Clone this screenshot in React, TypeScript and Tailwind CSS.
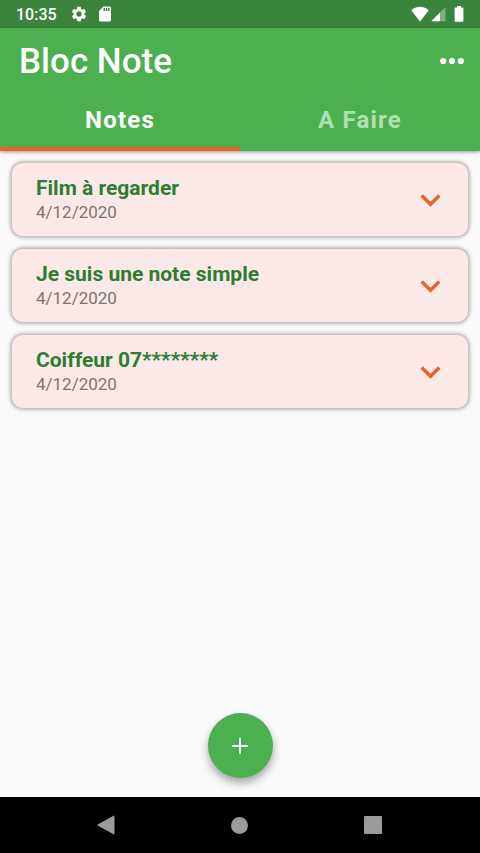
import { MdSdCard, MdSettings } from 'react-icons/md';

const notes = [
  { title: 'Film à regarder', date: '4/12/2020' },
  { title: 'Je suis une note simple', date: '4/12/2020' },
  { title: 'Coiffeur 07********', date: '4/12/2020' },
];

const StatusBar = () => (
  <div className="flex h-7 items-center justify-between bg-[#3b843e] px-4 text-white">
    <div className="flex items-center">
      <span className="pt-0.5 text-base leading-6 font-medium">10:35</span>
      <MdSettings size={18} className="ml-[13px]" />
      <MdSdCard size={18} className="ml-2" />
    </div>
    <div className="flex items-center">
      <svg width="18" height="16" viewBox="0 0 18 16" fill="currentColor">
        <path d="M9 15.5 0.3 4.2C2.6 2 5.6 0.7 9 0.7s6.4 1.3 8.7 3.5L9 15.5z" />
      </svg>
      <svg width="15" height="16" viewBox="0 0 15 16" fill="currentColor" className="ml-0.5">
        <path d="M0.3 15.2 14.5 1v14.2z" opacity="0.35" />
        <path d="M0.3 15.2 9 6.5v8.7z" />
      </svg>
      <svg width="10" height="16" viewBox="0 0 10 16" fill="currentColor" className="ml-2">
        <path d="M3 0h4v1.6h1.5c.5 0 .9.4.9.9v12.4c0 .5-.4.9-.9.9h-7c-.5 0-.9-.4-.9-.9V2.5c0-.5.4-.9.9-.9H3z" />
      </svg>
    </div>
  </div>
);

const Header = () => (
  <header className="relative z-10 bg-[#4caf50] text-white shadow-[0_1px_4px_rgba(0,0,0,0.4)]">
    <div className="flex h-[66px] items-center justify-between pl-[19px] pr-4">
      <h1 className="pt-0.5 text-[35px] leading-[64px] font-medium">Bloc Note</h1>
      <button type="button" aria-label="Menu">
        <svg width="24" height="24" viewBox="0 0 24 24" fill="currentColor">
          <circle cx="3.2" cy="12" r="3.1" />
          <circle cx="12" cy="12" r="3.1" />
          <circle cx="20.8" cy="12" r="3.1" />
        </svg>
      </button>
    </div>
    <div role="tablist" className="grid grid-cols-2 text-2xl font-bold tracking-wider">
      <button type="button" role="tab" aria-selected="true" className="h-[57px] border-b-4 border-[#e8622c] pb-0.5">
        Notes
      </button>
      <button type="button" role="tab" aria-selected="false" className="h-[57px] border-b-4 border-transparent pb-0.5 text-[#b0e0b2]">
        A Faire
      </button>
    </div>
  </header>
);

const NoteCard = ({ title, date }: { title: string; date: string }) => (
  <li className="flex h-[75px] items-center justify-between rounded-xl border border-[#cdc0c0] bg-[#fae9e7] pl-6 pr-[26px] shadow-[0_0_4px_rgba(0,0,0,0.4)]">
    <div>
      <h2 className="text-[21px] leading-6 font-bold text-[#2e7d32]">{title}</h2>
      <p className="text-[17px] leading-6 text-[#7d7474]">{date}</p>
    </div>
    <button type="button" aria-label={`Ouvrir ${title}`} className="text-[#e8622c]">
      <svg width="24" height="24" viewBox="0 0 24 24" fill="none" stroke="currentColor" strokeWidth="3.4">
        <path d="M3.7 7.5 12.5 16.3 21.3 7.5" />
      </svg>
    </button>
  </li>
);

const NavBar = () => (
  <nav className="grid h-14 grid-cols-3 items-center justify-items-center bg-black px-10 text-[#9b9b9b]">
    <button type="button" aria-label="Retour">
      <svg width="20" height="20" viewBox="0 0 20 20" fill="currentColor">
        <path d="M16.5 0.7c.5-.3 1 0 1 .5v17.6c0 .5-.5.8-1 .5L.7 10.5c-.4-.2-.4-.8 0-1z" />
      </svg>
    </button>
    <button type="button" aria-label="Accueil" className="h-[17px] w-[17px] rounded-full bg-[#9b9b9b]" />
    <button type="button" aria-label="Applications" className="h-[18px] w-[18px] rounded-[1px] bg-[#9b9b9b]" />
  </nav>
);

const App = () => {
  return (
    <div className="flex min-h-screen flex-col bg-[#fafafa] font-['Roboto',sans-serif]">
      <StatusBar />
      <Header />
      <main className="flex flex-1 flex-col justify-between px-[11px] pt-[11px] pb-[19px]">
        <ul className="flex flex-col gap-[11px]">
          {notes.map((note) => (
            <NoteCard key={note.title} {...note} />
          ))}
        </ul>
        <button
          type="button"
          aria-label="Ajouter une note"
          className="flex h-[65px] w-[65px] items-center justify-center self-center rounded-full bg-[#4caf50] text-white shadow-[0_5px_9px_rgba(0,0,0,0.35)]"
        >
          <svg width="18" height="18" viewBox="0 0 18 18" stroke="currentColor" strokeWidth="2">
            <path d="M9 1v16M1 9h16" />
          </svg>
        </button>
      </main>
      <NavBar />
    </div>
  );
};

export default App;
